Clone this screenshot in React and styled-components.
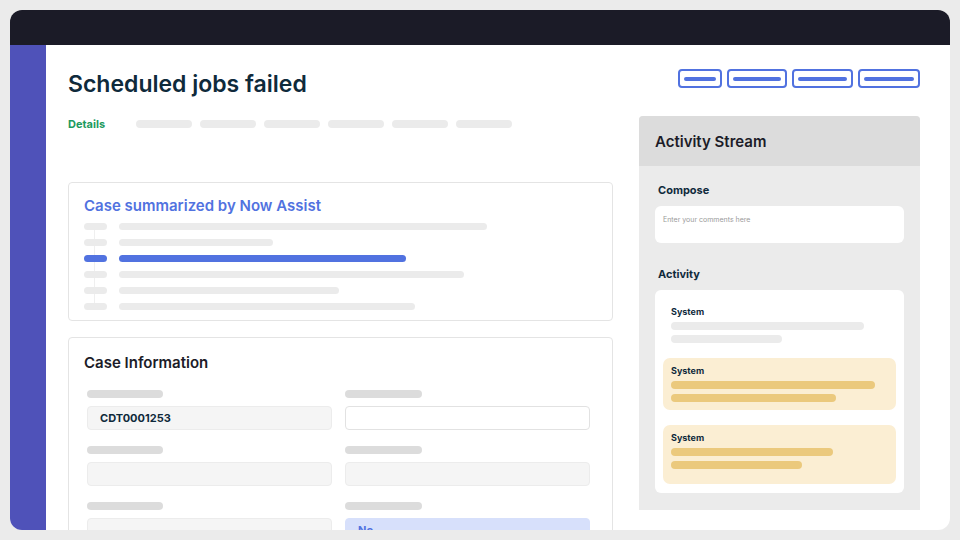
import React from 'react';
import styled, { createGlobalStyle } from 'styled-components';

const GlobalStyle = createGlobalStyle`
  html, body {
    margin: 0;
    padding: 0;
    background: #ebebeb;
    font-family: 'Inter', 'Noto Sans', sans-serif;
  }
`;

const summaryRows = [
  { width: 368 },
  { width: 154 },
  { width: 287, active: true },
  { width: 345 },
  { width: 220 },
  { width: 296 },
];

const tabPills = [1, 2, 3, 4, 5, 6];
const topButtons = [44, 60, 61, 62];

const App = () => {
  return (
    <>
      <GlobalStyle />
      <Page>
        <Frame>
          <TopBar />
          <Main>
            <SideNav />
            <Content>
              <Header>
                <Title>Scheduled jobs failed</Title>
                <ButtonGroup>
                  {topButtons.map((w, i) => (
                    <OutlineButton key={i} $width={w}>
                      <ButtonLine />
                    </OutlineButton>
                  ))}
                </ButtonGroup>
              </Header>
              <Body>
                <LeftColumn>
                  <Tabs>
                    <ActiveTab>Details</ActiveTab>
                    <TabPills>
                      {tabPills.map((i) => (
                        <Pill key={i} $width={56} $height={8} />
                      ))}
                    </TabPills>
                  </Tabs>
                  <Card $pad="14px 15px 10px">
                    <SummaryTitle>Case summarized by Now Assist</SummaryTitle>
                    <Timeline>
                      {summaryRows.map((row, i) => (
                        <TimelineRow key={i}>
                          <Dot $active={row.active} />
                          <Bar $active={row.active} style={{ width: row.width }} />
                        </TimelineRow>
                      ))}
                    </Timeline>
                  </Card>
                  <Card $pad="15px 15px 20px">
                    <CardTitle>Case Information</CardTitle>
                    <FieldGrid>
                      <Field>
                        <Pill $width={76} $height={8} $dark />
                        <Input $variant="filled">CDT0001253</Input>
                      </Field>
                      <Field>
                        <Pill $width={77} $height={8} $dark />
                        <Input $variant="outline" />
                      </Field>
                      <Field>
                        <Pill $width={76} $height={8} $dark />
                        <Input $variant="filled" />
                      </Field>
                      <Field>
                        <Pill $width={77} $height={8} $dark />
                        <Input $variant="filled" />
                      </Field>
                      <Field>
                        <Pill $width={76} $height={8} $dark />
                        <Input $variant="filled" />
                      </Field>
                      <Field>
                        <Pill $width={77} $height={8} $dark />
                        <Input $variant="blue">No</Input>
                      </Field>
                    </FieldGrid>
                  </Card>
                </LeftColumn>
                <Panel>
                  <PanelHeader>Activity Stream</PanelHeader>
                  <PanelBody>
                    <SectionLabel>Compose</SectionLabel>
                    <Compose>Enter your comments here</Compose>
                    <SectionLabel $top={23}>Activity</SectionLabel>
                    <ActivityCard>
                      <Entry>
                        <EntryTitle>System</EntryTitle>
                        <EntryBar style={{ width: 193 }} />
                        <EntryBar style={{ width: 111 }} />
                      </Entry>
                      <Entry $highlight>
                        <EntryTitle>System</EntryTitle>
                        <EntryBar $highlight style={{ width: 204 }} />
                        <EntryBar $highlight style={{ width: 165 }} />
                      </Entry>
                      <Entry $highlight $tall>
                        <EntryTitle>System</EntryTitle>
                        <EntryBar $highlight style={{ width: 162 }} />
                        <EntryBar $highlight style={{ width: 131 }} />
                      </Entry>
                    </ActivityCard>
                  </PanelBody>
                </Panel>
              </Body>
            </Content>
          </Main>
        </Frame>
      </Page>
    </>
  );
};

const Page = styled.div`
  width: 960px;
  height: 540px;
  padding: 10px;
  box-sizing: border-box;
  background: #ebebeb;
`;
const Frame = styled.div`
  width: 940px;
  height: 520px;
  border-radius: 12px;
  overflow: hidden;
  background: #ffffff;
  display: flex;
  flex-direction: column;
`;
const TopBar = styled.div`
  height: 35px;
  background: #1b1b27;
  flex-shrink: 0;
`;
const Main = styled.div`
  flex: 1;
  display: flex;
  min-height: 0;
`;
const SideNav = styled.div`
  width: 36px;
  background: #4f52b9;
  flex-shrink: 0;
`;
const Content = styled.div`
  flex: 1;
  padding: 24px 30px 0 22px;
  display: flex;
  flex-direction: column;
  overflow: hidden;
`;
const Header = styled.div`
  display: flex;
  justify-content: space-between;
  align-items: flex-start;
  height: 47px;
  flex-shrink: 0;
`;
const Title = styled.h1`
  margin: 0;
  font-size: 23px;
  line-height: 30px;
  font-weight: 600;
  color: #0f2a3b;
  letter-spacing: 0;
`;
const ButtonGroup = styled.div`
  display: flex;
  gap: 5px;
`;
const OutlineButton = styled.div`
  width: ${(p) => p.$width}px;
  height: 19px;
  box-sizing: border-box;
  border: 2px solid #5172e0;
  border-radius: 4px;
  padding: 0 4px;
  display: flex;
  align-items: center;
`;
const ButtonLine = styled.div`
  flex: 1;
  height: 4px;
  border-radius: 2px;
  background: #5172e0;
`;
const Body = styled.div`
  display: flex;
  gap: 26px;
  align-items: flex-start;
  flex-shrink: 0;
`;
const LeftColumn = styled.div`
  flex: 1;
  display: flex;
  flex-direction: column;
  gap: 16px;
`;
const Tabs = styled.div`
  display: flex;
  align-items: center;
  height: 16px;
  margin-bottom: 34px;
`;
const ActiveTab = styled.span`
  font-size: 11px;
  font-weight: 700;
  color: #1d9a5e;
  width: 68px;
`;
const TabPills = styled.div`
  display: flex;
  gap: 8px;
`;
const Pill = styled.div`
  width: ${(p) => p.$width}px;
  height: ${(p) => p.$height}px;
  border-radius: ${(p) => p.$height / 2}px;
  background: ${(p) => (p.$dark ? '#dcdcdc' : '#ebebeb')};
`;
const Card = styled.div`
  border: 1px solid #e4e4e4;
  border-radius: 4px;
  padding: ${(p) => p.$pad};
  background: #fff;
`;
const SummaryTitle = styled.div`
  font-size: 15px;
  font-weight: 600;
  color: #5172e0;
  line-height: 18px;
  margin-bottom: 8px;
`;
const Timeline = styled.div`
  display: flex;
  flex-direction: column;
  gap: 9px;
  position: relative;
  &::before {
    content: '';
    position: absolute;
    left: 10px;
    top: 4px;
    bottom: 4px;
    width: 1px;
    background: #efefef;
  }
`;
const TimelineRow = styled.div`
  display: flex;
  align-items: center;
  gap: 12px;
  height: 7px;
`;
const Dot = styled.div`
  width: 23px;
  height: 7px;
  border-radius: 4px;
  position: relative;
  background: ${(p) => (p.$active ? '#5172e0' : '#ebebeb')};
`;
const Bar = styled.div`
  height: 7px;
  border-radius: 4px;
  background: ${(p) => (p.$active ? '#5172e0' : '#ebebeb')};
`;
const CardTitle = styled.div`
  font-size: 15px;
  font-weight: 600;
  color: #1c1c28;
  line-height: 20px;
  margin-bottom: 17px;
`;
const FieldGrid = styled.div`
  display: grid;
  grid-template-columns: 1fr 1fr;
  column-gap: 13px;
  row-gap: 16px;
  padding: 0 7px 0 3px;
`;
const Field = styled.div`
  display: flex;
  flex-direction: column;
  gap: 8px;
`;
const Input = styled.div`
  height: 24px;
  box-sizing: border-box;
  border-radius: 4px;
  padding: 0 12px;
  display: flex;
  align-items: center;
  font-size: 11px;
  font-weight: 700;
  background: ${(p) =>
    p.$variant === 'blue' ? '#d7e0fb' : p.$variant === 'outline' ? '#ffffff' : '#f5f5f5'};
  border: 1px solid ${(p) => (p.$variant === 'outline' ? '#e2e2e2' : p.$variant === 'blue' ? '#d7e0fb' : '#ececec')};
  color: ${(p) => (p.$variant === 'blue' ? '#5172e0' : '#0f2a3b')};
`;
const Panel = styled.div`
  width: 281px;
  flex-shrink: 0;
  border-radius: 4px 4px 0 0;
  overflow: hidden;
  background: #ebebeb;
`;
const PanelHeader = styled.div`
  height: 50px;
  background: #dcdcdc;
  padding: 0 16px;
  display: flex;
  align-items: center;
  font-size: 15px;
  font-weight: 600;
  color: #1c1c28;
`;
const PanelBody = styled.div`
  padding: 16px 16px 17px;
  display: flex;
  flex-direction: column;
`;
const SectionLabel = styled.div`
  font-size: 11px;
  font-weight: 700;
  color: #0f2a3b;
  margin: ${(p) => p.$top || 0}px 0 8px 3px;
  line-height: 16px;
`;
const Compose = styled.div`
  height: 37px;
  background: #fff;
  border-radius: 6px;
  padding: 9px 8px 0;
  box-sizing: border-box;
  font-size: 7px;
  color: #9a9a9a;
`;
const ActivityCard = styled.div`
  background: #fff;
  border-radius: 6px;
  padding: 14px 8px 9px;
  display: flex;
  flex-direction: column;
  gap: 15px;
`;
const Entry = styled.div`
  border-radius: 7px;
  padding: ${(p) => (p.$highlight ? '7px 8px 8px' : '2px 8px 0')};
  min-height: ${(p) => (p.$tall ? 59 : 0)}px;
  box-sizing: border-box;
  background: ${(p) => (p.$highlight ? '#fbeed3' : 'transparent')};
  display: flex;
  flex-direction: column;
  gap: 5px;
`;
const EntryTitle = styled.div`
  font-size: 9px;
  font-weight: 700;
  color: #0f2a3b;
  line-height: 12px;
  margin-bottom: -1px;
`;
const EntryBar = styled.div`
  height: 8px;
  border-radius: 4px;
  background: ${(p) => (p.$highlight ? '#ebc97d' : '#ebebeb')};
`;

export default App;
